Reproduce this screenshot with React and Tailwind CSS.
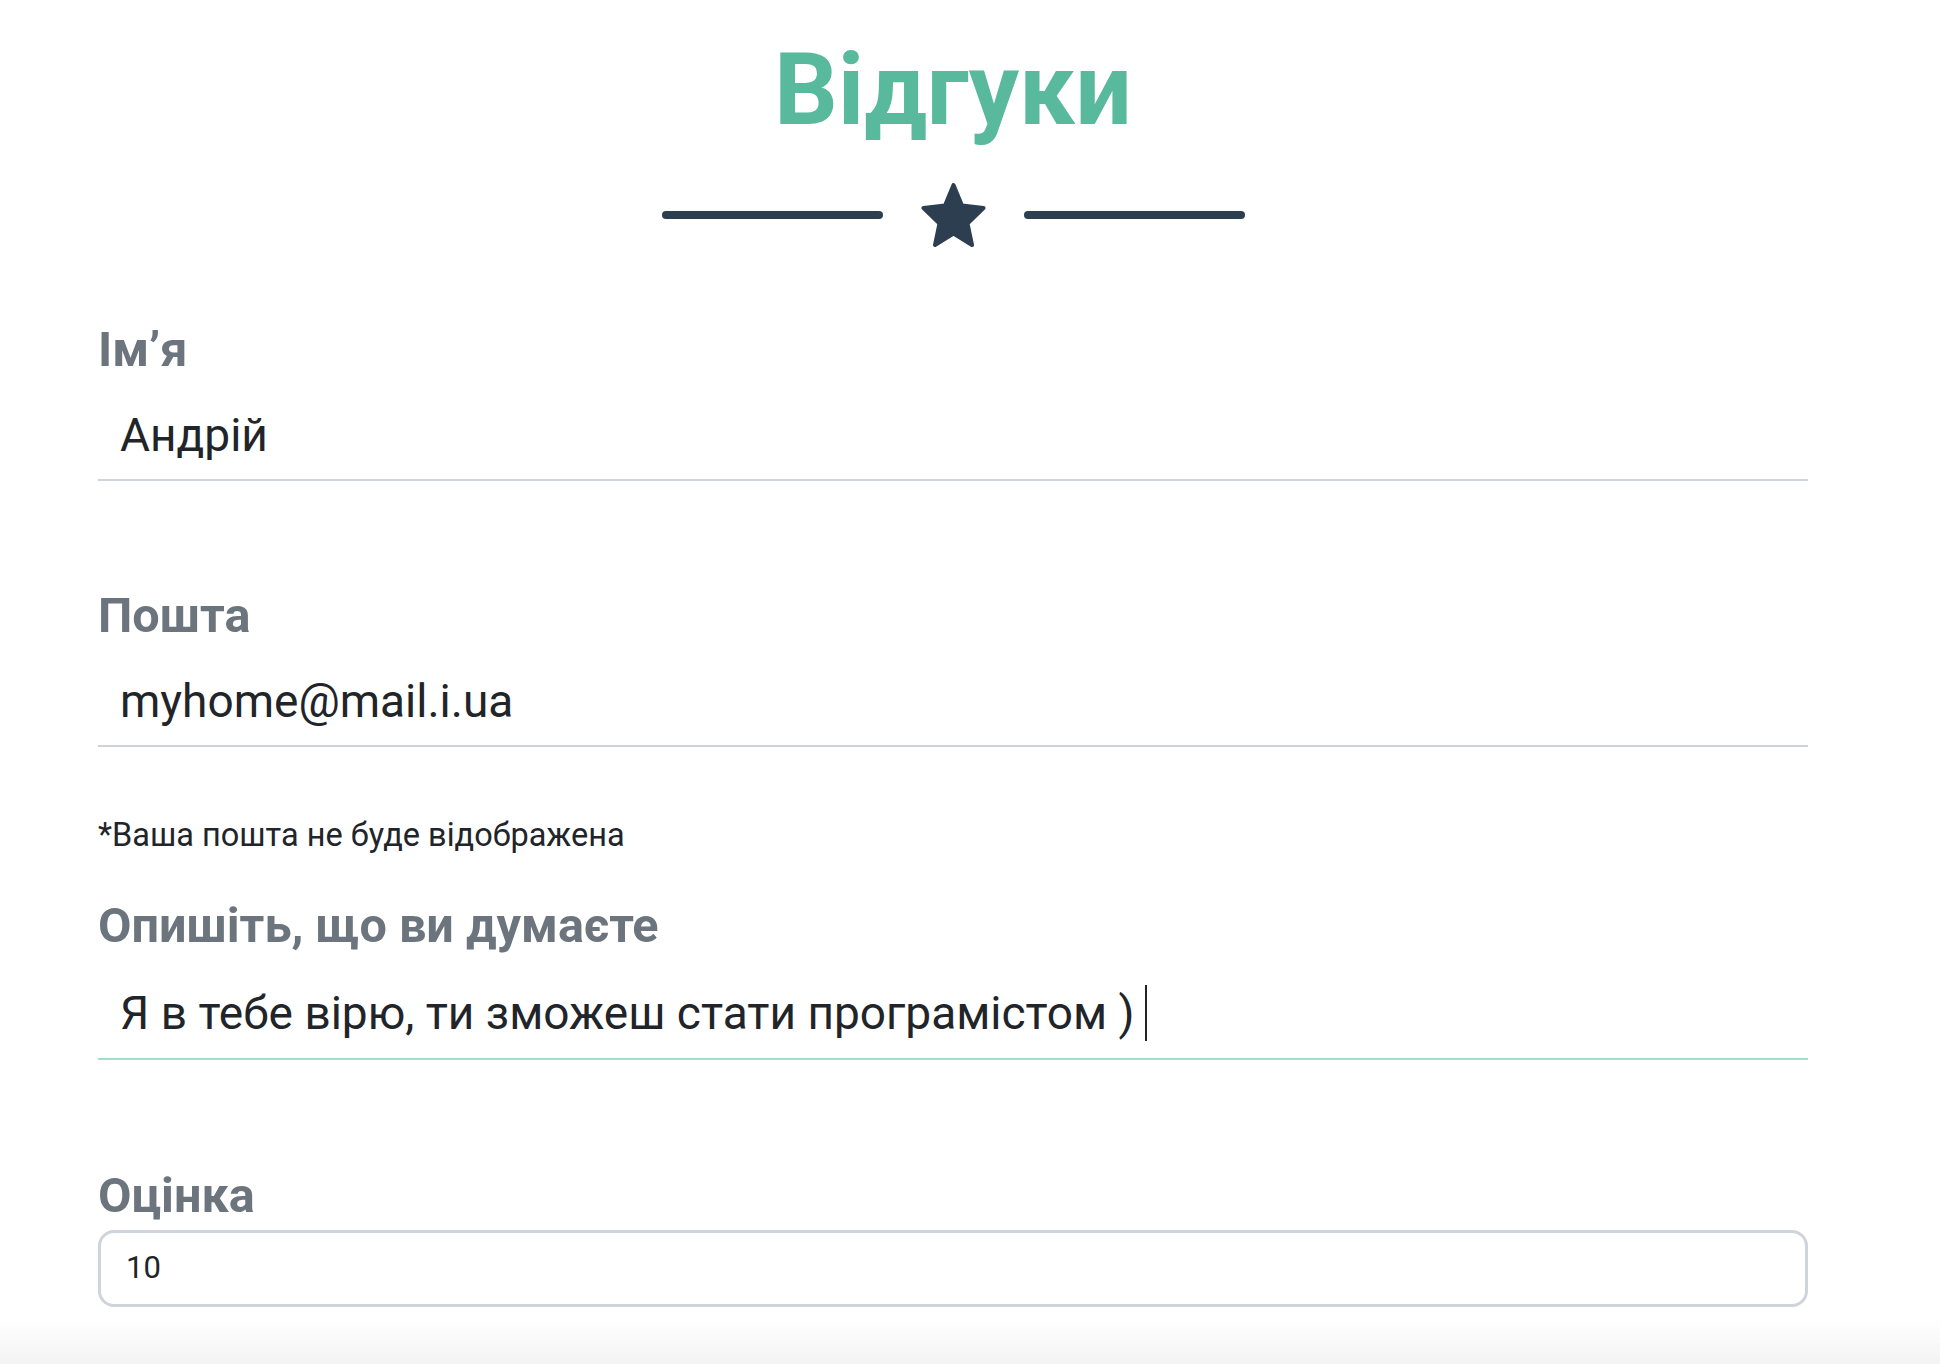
import React from 'react';

function Star() {
  return (
    <svg viewBox="0 0 66 64" className="w-[67px] h-[64px] shrink-0" fill="#2c3e50">
      <path
        d="M33 2 L41.5 22.5 L63 25 L47 40.5 L51.5 62 L33 50.5 L14.5 62 L19 40.5 L3 25 L24.5 22.5 Z"
        stroke="#2c3e50"
        strokeWidth="4"
        strokeLinejoin="round"
      />
    </svg>
  );
}

function Field({ label, children, focused }) {
  return (
    <div>
      <label className="block text-[48.6px] font-bold leading-[53px] text-[#6c757d]">{label}</label>
      <div
        className={
          focused
            ? 'pt-[33px] pb-[17px] pl-[22px] border-b-2 border-[#a3dccb]'
            : 'pt-[33px] pb-[17px] pl-[22px] border-b-2 border-[#ced4da]'
        }
      >
        {children}
      </div>
    </div>
  );
}

export default function App() {
  return (
    <div className="relative h-[1364px] w-full overflow-hidden bg-white font-['Roboto',sans-serif]">
      <div className="ml-[98px] w-[1710px]">
        <div className="flex flex-col items-center pt-[30px]">
          <h2 className="text-[100px] font-bold leading-[120px] text-[#58b99c]">Відгуки</h2>
          <div className="mt-[33px] flex items-center gap-[37px]">
            <div className="h-[8px] w-[221px] rounded-full bg-[#2c3e50]" />
            <Star />
            <div className="h-[8px] w-[221px] rounded-full bg-[#2c3e50]" />
          </div>
        </div>

        <form className="mt-[76px]">
          <Field label="Ім’я">
            <div className="text-[46px] leading-[53px] text-[#212529]">Андрій</div>
          </Field>

          <div className="mt-[108px]">
            <Field label="Пошта">
              <div className="text-[46px] leading-[53px] text-[#212529]">myhome@mail.i.ua</div>
            </Field>
          </div>

          <p className="mt-[70px] text-[32.5px] leading-[36px] text-[#212529]">*Ваша пошта не буде відображена</p>

          <div className="mt-[46px]">
            <Field label="Опишіть, що ви думаєте" focused>
              <div className="flex items-center text-[46px] leading-[53px] text-[#212529]">
                <span>Я в тебе вірю, ти зможеш стати програмістом )</span>
                <span className="ml-[10px] h-[56px] w-[2px] bg-[#212529]" />
              </div>
            </Field>
          </div>

          <div className="mt-[109px]">
            <label className="block text-[48.6px] font-bold leading-[53px] text-[#6c757d]">Оцінка</label>
            <div className="mt-[8px] h-[77px] rounded-[16px] border-[3px] border-[#ced4da] px-[25px] flex items-center text-[31px] text-[#212529]">
              10
            </div>
          </div>
        </form>
      </div>
      <div className="absolute bottom-0 left-0 h-[46px] w-full bg-gradient-to-b from-white to-[#f3f3f3]" />
    </div>
  );
}
